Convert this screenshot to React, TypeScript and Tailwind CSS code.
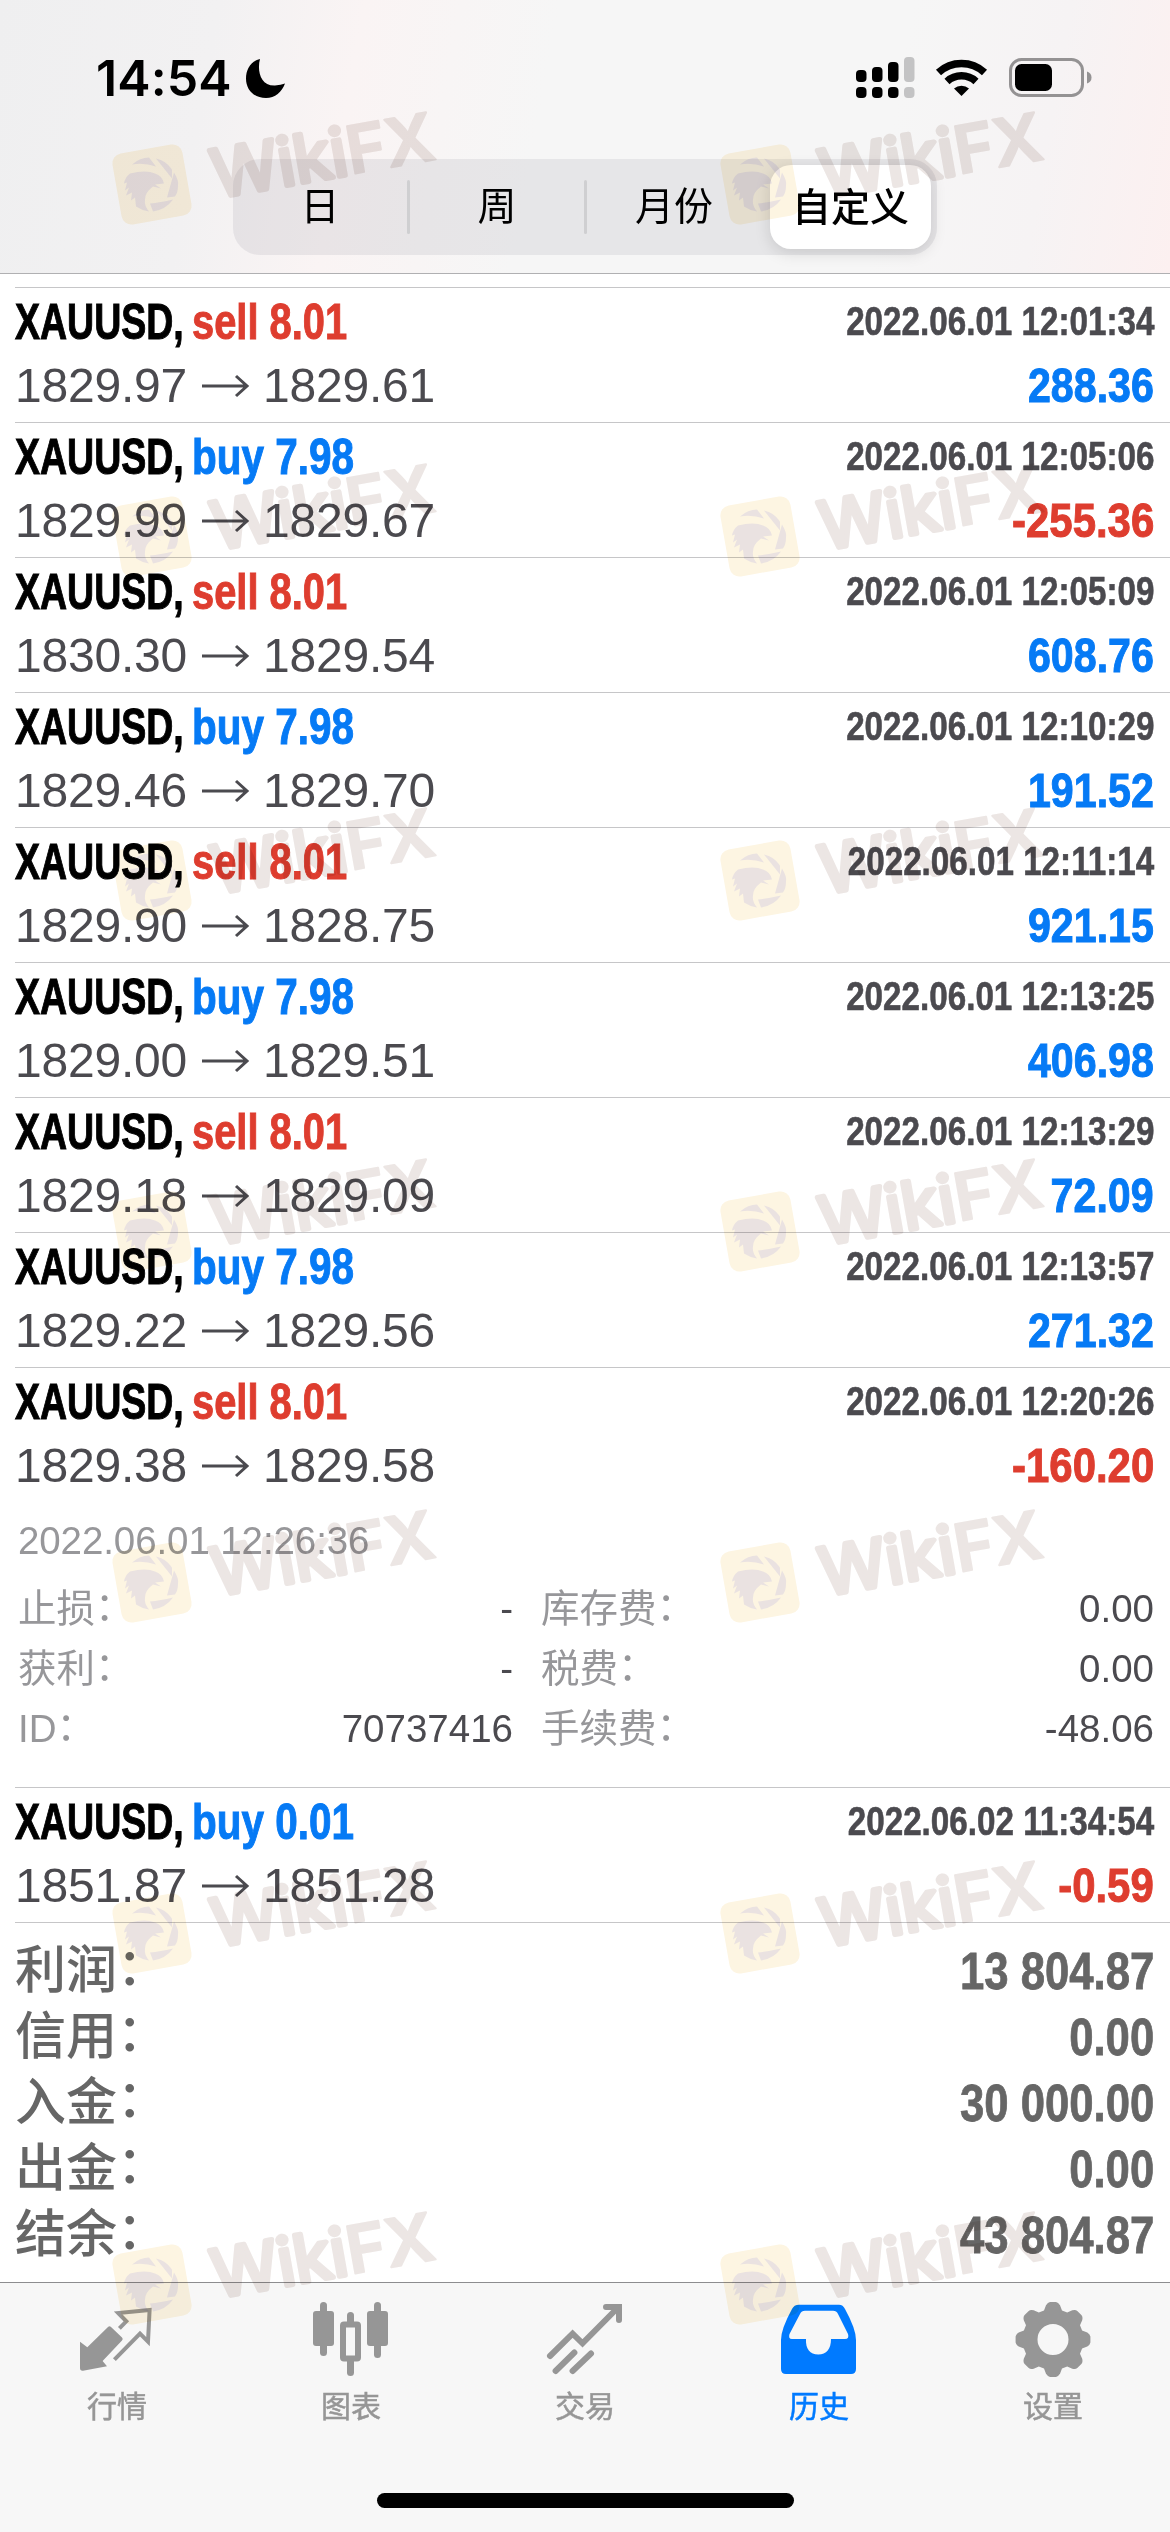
import { Fragment } from 'react';
import { clsx } from 'clsx';

interface Deal {
  side: 'sell' | 'buy';
  volume: string;
  open: string;
  close: string;
  time: string;
  profit: string;
  expanded?: boolean;
}

const deals: Deal[] = [
  { side: 'sell', volume: '8.01', open: '1829.97', close: '1829.61', time: '2022.06.01 12:01:34', profit: '288.36' },
  { side: 'buy', volume: '7.98', open: '1829.99', close: '1829.67', time: '2022.06.01 12:05:06', profit: '-255.36' },
  { side: 'sell', volume: '8.01', open: '1830.30', close: '1829.54', time: '2022.06.01 12:05:09', profit: '608.76' },
  { side: 'buy', volume: '7.98', open: '1829.46', close: '1829.70', time: '2022.06.01 12:10:29', profit: '191.52' },
  { side: 'sell', volume: '8.01', open: '1829.90', close: '1828.75', time: '2022.06.01 12:11:14', profit: '921.15' },
  { side: 'buy', volume: '7.98', open: '1829.00', close: '1829.51', time: '2022.06.01 12:13:25', profit: '406.98' },
  { side: 'sell', volume: '8.01', open: '1829.18', close: '1829.09', time: '2022.06.01 12:13:29', profit: '72.09' },
  { side: 'buy', volume: '7.98', open: '1829.22', close: '1829.56', time: '2022.06.01 12:13:57', profit: '271.32' },
  { side: 'sell', volume: '8.01', open: '1829.38', close: '1829.58', time: '2022.06.01 12:20:26', profit: '-160.20', expanded: true },
  { side: 'buy', volume: '0.01', open: '1851.87', close: '1851.28', time: '2022.06.02 11:34:54', profit: '-0.59' },
];

const details = [
  ['止损', '-', '库存费', '0.00'],
  ['获利', '-', '税费', '0.00'],
  ['ID', '70737416', '手续费', '-48.06'],
];

const totals = [
  ['利润', '13 804.87'],
  ['信用', '0.00'],
  ['入金', '30 000.00'],
  ['出金', '0.00'],
  ['结余', '43 804.87'],
];

function StatusBar() {
  return (
    <div className="flex h-[159px] items-start justify-between pt-[48px] pr-[78px] pl-[96px]">
      <div className="flex items-center">
        <span className="w-[149px] font-['Inter'] text-[50px] leading-[60px] font-semibold tracking-[0.1px]">
          14:54
        </span>
        <svg className="h-[40px] w-[40px]" viewBox="0 0 40 40">
          <path d="M15 1C12 12 15 28 30 27.500Q36 27 40 25.500C37 34 30 40 21 40C9 40 1 32 1 20.500C1 11 6 3 15 1Z" />
        </svg>
      </div>
      <svg className="mt-[8px] h-[44px] w-[236px]" viewBox="856 56 236 44">
        <rect x="856" y="70" width="10.500" height="12" rx="4" />
        <rect x="872" y="67" width="10.500" height="15" rx="4" />
        <rect x="888" y="62" width="10.500" height="20" rx="4" />
        <rect x="904" y="57" width="10.500" height="25" rx="4" fill="#c3c3c4" />
        <rect x="856" y="87" width="10.500" height="11" rx="4" />
        <rect x="872" y="87" width="10.500" height="11" rx="4" />
        <rect x="888" y="87" width="10.500" height="11" rx="4" />
        <rect x="904" y="87" width="10.500" height="11" rx="4" fill="#c3c3c4" />
        <path d="M938.500 72.500A34 34 0 0 1 984.500 72.500M947 81.500A21.500 21.500 0 0 1 976 81.500" fill="none" stroke="#000" strokeWidth="7.500" />
        <path d="M954 88.500A11.500 11.500 0 0 1 969 88.500L961.500 96Z" />
        <rect x="1010.500" y="59.500" width="72" height="36" rx="11" fill="none" stroke="#949293" strokeWidth="3" />
        <rect x="1015" y="64" width="37" height="27" rx="6.500" />
        <path d="M1087 71.500Q1091.500 73 1091.500 77.500T1087 83.500Z" fill="#949293" />
      </svg>
    </div>
  );
}

function PeriodSwitch() {
  return (
    <div className="mx-auto flex h-[96px] w-[704px] items-center rounded-[27px] bg-[#767680]/12 text-center text-[39px] leading-[86px]">
      <div className="w-[174px]">日</div>
      <div className="h-[54px] w-[3px] rounded-full bg-[#cfcfd1]" />
      <div className="w-[174px]">周</div>
      <div className="h-[54px] w-[3px] rounded-full bg-[#cfcfd1]" />
      <div className="w-[174px]">月份</div>
      <div className="ml-[9px] h-[84px] w-[161px] rounded-[21px] bg-white text-[39px] font-medium shadow-[0_4px_16px_rgba(0,0,0,0.13)]">
        自定义
      </div>
    </div>
  );
}

function DealRow({ deal }: { deal: Deal }) {
  return (
    <div className="ml-[15px] h-[135px] border-t border-[#c6c6c8] pt-[3px] pr-[16px]">
      <div className="flex justify-between leading-[60px] font-bold whitespace-nowrap [-webkit-text-stroke:1px]">
        <div className="flex pt-px text-[50px]">
          <span className="h-[59px] w-[177px] origin-left scale-x-[0.75] text-black">XAUUSD,</span>
          <span
            className={clsx(
              'h-[59px] origin-left',
              deal.side === 'sell' ? 'scale-x-[0.797] text-[#de3d2f]' : 'scale-x-[0.81] text-[#067af5]'
            )}
          >
            {deal.side} {deal.volume}
          </span>
        </div>
        <span className="origin-right scale-x-[0.83] text-[40px] text-[#4b4a4f] [-webkit-text-stroke:0.6px]">
          {deal.time}
        </span>
      </div>
      <div className="flex justify-between leading-[69px] whitespace-nowrap">
        <div className="flex items-center text-[48px] tracking-[-0.2px] text-[#4b4a4f]">
          <span className="w-[187px]">{deal.open}</span>
          <svg className="h-[24px] w-[61px]" viewBox="0 0 61 24" fill="none" stroke="currentColor" strokeWidth="3">
            <path d="M0 12H45M34 2L45 12L34 22" />
          </svg>
          <span>{deal.close}</span>
        </div>
        <span
          className={clsx(
            'origin-right text-[49px] font-bold [-webkit-text-stroke:1px]',
            deal.profit.startsWith('-') ? 'scale-x-[0.855] text-[#de3d2f]' : 'scale-x-[0.84] text-[#067af5]'
          )}
        >
          {deal.profit}
        </span>
      </div>
    </div>
  );
}

function Label({ children }: { children: string }) {
  return (
    <span>
      {children}
      <span className="relative -top-[0.06em]">：</span>
    </span>
  );
}

function DealDetails() {
  return (
    <div className="h-[285px] pt-[9px] pr-[16px] pl-[18px] text-[38.5px] leading-[60px] text-[#97979a]">
      <div className="h-[68px] tracking-[-0.1px]">2022.06.01 12:26:36</div>
      {details.map(([label, value, feeLabel, fee]) => (
        <div key={label} className="flex h-[60px]">
          <Label>{label}</Label>
          <span className="ml-auto text-[#4b4a4f]">{value}</span>
          <div className="ml-[28px] flex w-[613px] justify-between">
            <Label>{feeLabel}</Label>
            <span className="text-[#4b4a4f]">{fee}</span>
          </div>
        </div>
      ))}
    </div>
  );
}

function QuotesIcon() {
  return (
    <>
      <path d="M3 42.700L10.300 48.300L31 28Q32.500 26.500 34 28L45 38.500Q46.500 40 45 41.500L25.600 62L30 67.300L6 71.700Q3 72 3 69Z" />
      <path d="M42.400 29.300L49.300 22.300L41.200 14L72.600 11L71 42.700L63 34.700L37.400 60.700" fill="none" stroke="currentColor" strokeWidth="4" />
    </>
  );
}

function ChartIcon() {
  return (
    <>
      <rect x="2" y="12" width="21" height="35" rx="3" />
      <rect x="9" y="3" width="7" height="54" rx="3.500" />
      <rect x="36" y="13" width="7" height="15" rx="3.500" />
      <rect x="36" y="57" width="7" height="20" rx="3.500" />
      <rect x="32" y="25.500" width="15" height="34" rx="1" fill="none" stroke="currentColor" strokeWidth="6" />
      <rect x="56" y="12" width="21" height="35" rx="3" />
      <rect x="63" y="3" width="7" height="56" rx="3.500" />
    </>
  );
}

function TradeIcon() {
  return (
    <path
      d="M5 57L27.600 34.700L37.500 44.300L73 8.500M61 8H74V21M10.600 72L29.400 53.500M27.600 72L46 54.500"
      fill="none"
      stroke="currentColor"
      strokeWidth="6"
      strokeLinecap="round"
    />
  );
}

function HistoryIcon() {
  return (
    <path
      fillRule="evenodd"
      d="M20 5.700H60Q64 5.700 66 10Q77 30 77 41V70Q77 75 72 75H7Q2 75 2 70V41Q2 30 13 10Q15 5.700 20 5.700ZM26 11.700Q22.500 11.700 21 15L10.500 35Q9 40 13 40H27C26.500 50 31 55.500 39.300 55.500S52 50 52 40H66Q70.500 40 69 35L59 15Q57.500 11.700 54 11.700Z"
    />
  );
}

function gearPath() {
  const at = (angle: number, r: number) =>
    `${(40 + r * Math.sin(angle)).toFixed(1)} ${(40.5 - r * Math.cos(angle)).toFixed(1)}`;
  let d = '';
  for (let i = 0; i < 8; i++) {
    const a = (i * Math.PI) / 4;
    d += `${i ? 'L' : 'M'}${at(a - 0.3, 30.5)}L${at(a - 0.2, 35)}Q${at(a - 0.14, 37.5)} ${at(a - 0.08, 37.5)}`;
    d += `L${at(a + 0.08, 37.5)}Q${at(a + 0.14, 37.5)} ${at(a + 0.2, 35)}L${at(a + 0.3, 30.5)}`;
  }
  return `${d}ZM24.500 40.500a15.500 15.500 0 1 0 31 0a15.500 15.500 0 1 0 -31 0Z`;
}

function GearIcon() {
  return <path fillRule="evenodd" d={gearPath()} />;
}

const tabs = [
  { label: '行情', Icon: QuotesIcon },
  { label: '图表', Icon: ChartIcon },
  { label: '交易', Icon: TradeIcon },
  { label: '历史', Icon: HistoryIcon, active: true },
  { label: '设置', Icon: GearIcon },
];

function TabBar() {
  return (
    <div className="flex h-[250px] flex-col justify-between border-t-[1.500px] border-[#8d8d8f] bg-[#f7f7f7] pb-[24px]">
      <div className="grid grid-cols-5 pt-[16px]">
        {tabs.map(({ label, Icon, active }) => (
          <div
            key={label}
            className={clsx('flex flex-col items-center', active ? 'text-[#007aff]' : 'text-[#969696]')}
          >
            <svg className="h-[80px] w-[80px]" viewBox="0 0 80 80" fill="currentColor">
              <Icon />
            </svg>
            <span className="mt-[6px] text-[30px] leading-[44px] [-webkit-text-stroke:0.5px]">{label}</span>
          </div>
        ))}
      </div>
      <div className="mx-auto h-[15px] w-[417px] rounded-full bg-black" />
    </div>
  );
}

function Watermark() {
  return (
    <svg className="h-[220px] w-[400px]" viewBox="0 -60 400 220">
      <rect
        x="-35.500"
        y="-36"
        width="71"
        height="72"
        rx="10"
        fill="#fdf5e2"
        transform="translate(52 84.500) rotate(-10)"
      />
      <g transform="translate(52 84.500)" fill="#eae2e1">
        <path d="M-20 -20Q-12 -27 -3 -27L4 -18Q-8 -22 -20 -20Z" />
        <path d="M4 -26Q14 -24 20 -15V-6Z" />
        <path d="M22 -12Q27 -4 26 1Q26 8 23 12L15 13Z" />
        <path d="M21 15Q14 25 1 27L-2 19Q8 18 21 15Z" />
        <path d="M12 -1Q10 -9 3 -11Q-6 -15 -22 -11Q-27 -7 -28 -1L-25 -2L-27 6L-23 3L-26 11L-20 8L-21 16L-17 13L-16 22Q-10 26 -3 27Q-8 21 -7 15Q-7 8 1 2L9 4L3 0Z" />
      </g>
      <text
        transform="translate(116 98) rotate(-10)"
        textLength="225"
        lengthAdjust="spacingAndGlyphs"
        className="fill-[#ece6e4] font-['Inter'] text-[66px]"
        stroke="#ece6e4"
        strokeLinejoin="round"
      >
        <tspan className="font-normal" strokeWidth="5">
          Wiki
        </tspan>
        <tspan className="font-semibold" strokeWidth="2">
          FX
        </tspan>
      </text>
    </svg>
  );
}

export default function App() {
  return (
    <div className="relative h-[2532px] w-[1170px] overflow-hidden bg-white font-['Liberation_Sans','Noto_Sans_CJK_SC',sans-serif] text-black">
      <div className="flex h-full flex-col">
        <header className="h-[274px] border-b-[1.500px] border-[#b0b0b2] bg-[linear-gradient(100deg,#efeff0_0%,#f2f1f2_18%,#faf4f4_30%,#f6f6f6_46%,#f6f6f6_75%,#f6f3f4_88%,#fcf0f0_100%)]">
          <StatusBar />
          <PeriodSwitch />
        </header>
        <main className="flex-1 pt-[13px]">
          {deals.map((deal) => (
            <Fragment key={deal.time}>
              <DealRow deal={deal} />
              {deal.expanded && <DealDetails />}
            </Fragment>
          ))}
          <div className="ml-[15px] border-t border-[#c6c6c8] pt-[15px] pr-[16px] text-[#666]">
            {totals.map(([label, value]) => (
              <div key={label} className="flex h-[66px] justify-between leading-[66px] whitespace-nowrap">
                <span className="text-[51px] font-medium">
                  <Label>{label}</Label>
                </span>
                <span className="origin-right scale-x-[0.84] text-[52px] font-bold [-webkit-text-stroke:0.8px]">
                  {value}
                </span>
              </div>
            ))}
          </div>
        </main>
        <TabBar />
      </div>
      <div className="pointer-events-none absolute top-[40px] left-[100px] grid grid-cols-[608px_400px] grid-rows-[352px_344px_repeat(5,351px)] mix-blend-multiply">
        {Array.from({ length: 14 }, (_, i) => (
          <Watermark key={i} />
        ))}
      </div>
    </div>
  );
}
